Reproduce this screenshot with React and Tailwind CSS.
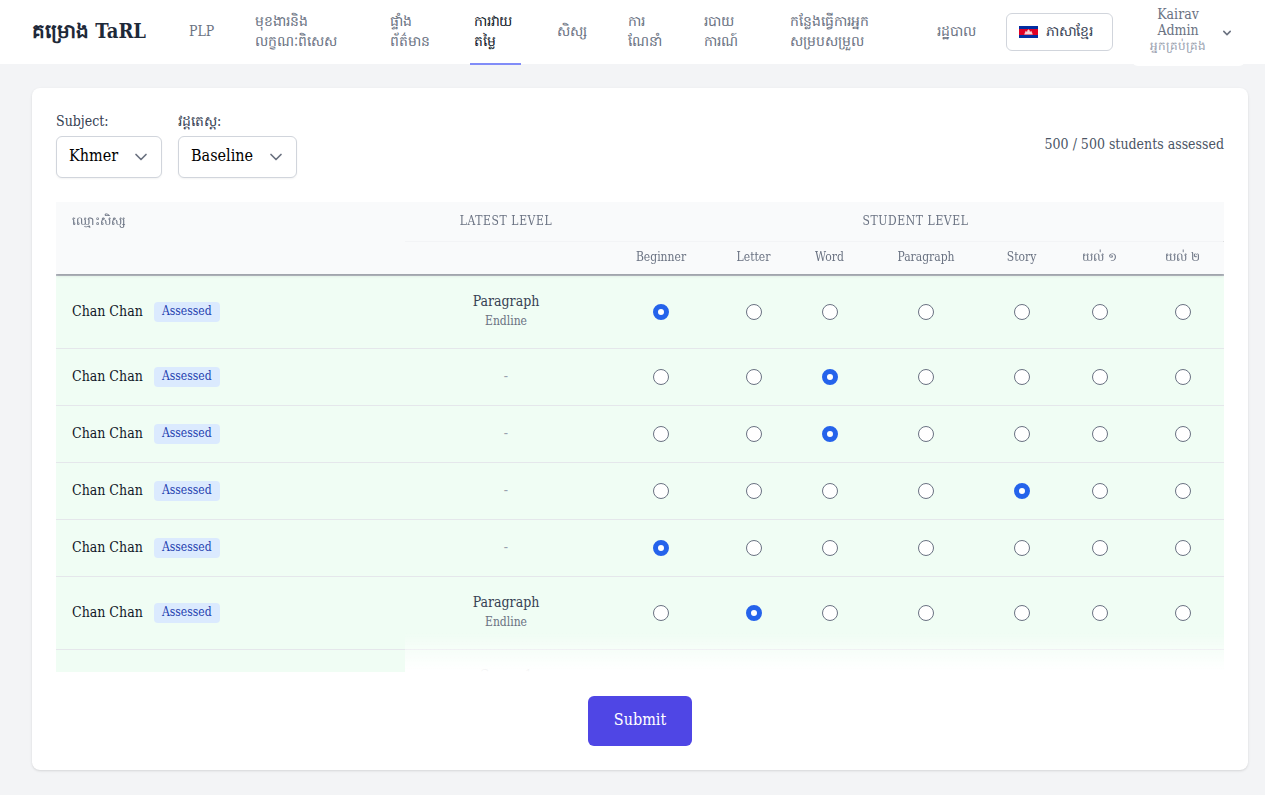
import { useState } from "react";

const NAV_ITEMS = [
  { lines: ["PLP"], width: "w-[34px]" },
  { lines: ["មុខងារនិង", "លក្ខណៈពិសេស"], width: "w-[103px]" },
  { lines: ["ផ្ទាំង", "ព័ត៌មាន"], width: "w-[52px]" },
  { lines: ["ការវាយ", "តម្លៃ"], width: "w-[51px]", active: true },
  { lines: ["សិស្ស"], width: "w-[39px]" },
  { lines: ["ការ", "ណែនាំ"], width: "w-[44px]" },
  { lines: ["របាយ", "ការណ៍"], width: "w-[54px]" },
  { lines: ["កន្លែងធ្វើការអ្នក", "សម្របសម្រួល"], width: "w-[115px]" },
  { lines: ["រដ្ឋបាល"], width: "w-[49px]" },
];

const LEVELS = ["Beginner", "Letter", "Word", "Paragraph", "Story", "យល់ ១", "យល់ ២"];

const STUDENTS = [
  { id: 1, name: "Chan Chan", latest: "Paragraph", cycle: "Endline", level: "Beginner" },
  { id: 2, name: "Chan Chan", level: "Word" },
  { id: 3, name: "Chan Chan", level: "Word" },
  { id: 4, name: "Chan Chan", level: "Story" },
  { id: 5, name: "Chan Chan", level: "Beginner" },
  { id: 6, name: "Chan Chan", latest: "Paragraph", cycle: "Endline", level: "Letter" },
  { id: 7, name: "Chan Chan", latest: "Comp. 1", cycle: "Endline", level: "Word" },
];

function CambodiaFlag() {
  return (
    <svg viewBox="0 0 19 12" className="h-3 w-[19px] shrink-0" aria-hidden="true">
      <rect width="19" height="12" fill="#032ea1" />
      <rect y="3" width="19" height="6" fill="#e00025" />
      <path
        d="M5.3 8.5V7.5h.6V6.2h.5V5.3l.5-.6.5.6v.5h.8V4.6l.5-.4.8-.9.8.9.5.4v1.2h.8v-.5l.5-.6.5.6v.9h.5v1.3h.6v1z"
        fill="#f3d3da"
      />
    </svg>
  );
}

function SelectField({ id, label, width, options }) {
  return (
    <div className="flex flex-col items-start">
      <label htmlFor={id} className="pb-1.5 text-sm leading-[18px] text-gray-700">
        {label}
      </label>
      <div className={`relative ${width}`}>
        <select
          id={id}
          className="block h-[42px] w-full appearance-none rounded-md border border-gray-300 bg-white pb-0.5 pl-3 pr-8 text-base text-black shadow-xs"
        >
          {options.map((o) => (
            <option key={o}>{o}</option>
          ))}
        </select>
        <svg
          viewBox="0 0 20 20"
          className="pointer-events-none absolute right-[11px] top-[11px] h-5 w-5"
          fill="none"
          stroke="#6b7280"
          strokeWidth="1.7"
          strokeLinecap="round"
          strokeLinejoin="round"
          aria-hidden="true"
        >
          <path d="M5 7.5l5 5 5-5" />
        </svg>
      </div>
    </div>
  );
}

function NavBar() {
  return (
    <nav className="flex h-16 items-center bg-white pl-8 pr-5">
      <a href="#home" className="mr-10 w-[113px] shrink-0 whitespace-nowrap pb-0.5 text-xl font-bold leading-7 text-gray-800">
        គម្រោង TaRL
      </a>
      <div className="-mb-px flex h-[65px] gap-8">
        {NAV_ITEMS.map((item) => (
          <a
            key={item.lines.join("")}
            href="#nav"
            className={`flex shrink-0 flex-col justify-center whitespace-nowrap border-b-2 px-1 pb-0.5 text-sm leading-5 ${item.width} ${
              item.active ? "border-[#818cf8] text-gray-900" : "border-transparent text-gray-500"
            }`}
          >
            {item.lines.map((line) => (
              <span key={line}>{line}</span>
            ))}
          </a>
        ))}
      </div>
      <button
        type="button"
        className="ml-6 flex h-[38px] w-[107px] shrink-0 items-center gap-2 rounded-md border border-gray-300 bg-white px-3 text-sm leading-5 text-gray-700"
      >
        <CambodiaFlag />
        <span className="whitespace-nowrap pb-0.5">ភាសាខ្មែរ</span>
      </button>
      <button
        type="button"
        className="-mb-[2px] ml-auto flex h-[66px] w-[113px] shrink-0 items-center justify-between rounded-md bg-white pl-[18px] pr-2.5 text-sm text-gray-500"
      >
        <span className="flex flex-col items-center pb-1.5 leading-4">
          <span>Kairav</span>
          <span>Admin</span>
          <span className="whitespace-nowrap text-xs text-gray-400">អ្នកគ្រប់គ្រង</span>
        </span>
        <svg viewBox="0 0 20 20" className="h-4 w-4 shrink-0" fill="#6b7280" aria-hidden="true">
          <path
            fillRule="evenodd"
            clipRule="evenodd"
            d="M5.293 7.293a1 1 0 011.414 0L10 10.586l3.293-3.293a1 1 0 111.414 1.414l-4 4a1 1 0 01-1.414 0l-4-4a1 1 0 010-1.414z"
          />
        </svg>
      </button>
    </nav>
  );
}

function StudentRow({ student, value, onChange }) {
  return (
    <tr className={`border-b border-gray-200 bg-green-50 ${student.latest ? "h-[73px]" : "h-[57px]"}`}>
      <td className="px-4">
        <div className="flex items-center gap-2 text-sm leading-5 text-gray-900">
          <span className="min-w-[74px] pb-0.5">{student.name}</span>
          <span className="rounded-sm bg-blue-100 px-2 pb-[3px] pt-px text-xs leading-4 text-[#1e40af]">Assessed</span>
        </div>
      </td>
      <td className="px-4 pb-0.5 text-center">
        {student.latest ? (
          <div className="flex flex-col text-sm leading-5 text-gray-700">
            <span>{student.latest}</span>
            <span className="text-xs leading-5 text-gray-500">{student.cycle}</span>
          </div>
        ) : (
          <div className="text-sm leading-5 text-gray-400">-</div>
        )}
      </td>
      {LEVELS.map((level) => (
        <td key={level} className="text-center align-middle">
          <input
            type="radio"
            name={`student-${student.id}`}
            aria-label={level}
            checked={value === level}
            onChange={() => onChange(level)}
            className="mx-auto block h-4 w-4 appearance-none rounded-full border border-gray-500 bg-white checked:border-[5px] checked:border-[#2563eb]"
          />
        </td>
      ))}
    </tr>
  );
}

export default function App() {
  const [levels, setLevels] = useState(() => Object.fromEntries(STUDENTS.map((s) => [s.id, s.level])));

  return (
    <div className="min-h-screen bg-gray-100 font-['DejaVu_Serif_Condensed','DejaVu_Serif',serif]">
      <NavBar />
      <main className="py-6 pl-8 pr-[17px]">
        <section className="rounded-lg bg-white p-6 shadow-sm">
          <div className="mb-6 flex items-center justify-between">
            <div className="flex gap-4">
              <SelectField id="subject" label="Subject:" width="w-[106px]" options={["Khmer", "Math"]} />
              <SelectField id="cycle" label="វដ្តតេស្ត:" width="w-[119px]" options={["Baseline", "Midline", "Endline"]} />
            </div>
            <p className="pb-0.5 text-sm leading-5 text-gray-600">500 / 500 students assessed</p>
          </div>

          <div className="relative">
            <div className="h-[470px] overflow-y-auto [scrollbar-width:none]">
              <table className="w-full table-fixed border-collapse">
                <colgroup>
                  <col className="w-[349px]" />
                  <col className="w-[202px]" />
                  <col className="w-[108px]" />
                  <col className="w-[77px]" />
                  <col className="w-[75px]" />
                  <col className="w-[118px]" />
                  <col className="w-[73px]" />
                  <col className="w-[83px]" />
                  <col className="w-[83px]" />
                </colgroup>
                <thead className="sticky top-0 z-10 border-b-2 border-[#bcc0c9] bg-gray-50 text-xs leading-4 text-gray-500 shadow-sm">
                  <tr className="h-[39px]">
                    <th rowSpan={2} className="px-4 pt-[11px] text-left align-top font-normal">
                      ឈ្មោះសិស្ស
                    </th>
                    <th className="text-center font-normal uppercase tracking-wider">Latest Level</th>
                    <th colSpan={7} className="text-center font-normal uppercase tracking-wider">
                      Student Level
                    </th>
                  </tr>
                  <tr className="h-[34px]">
                    <th className="border-t border-gray-100" />
                    {LEVELS.map((level) => (
                      <th key={level} className="border-t border-gray-100 pb-0.5 text-center font-normal">
                        {level}
                      </th>
                    ))}
                  </tr>
                </thead>
                <tbody>
                  {STUDENTS.map((s) => (
                    <StudentRow
                      key={s.id}
                      student={s}
                      value={levels[s.id]}
                      onChange={(level) => setLevels({ ...levels, [s.id]: level })}
                    />
                  ))}
                </tbody>
              </table>
            </div>
            <div className="pointer-events-none absolute bottom-0 right-0 z-20 h-10 w-[819px] bg-linear-to-t from-white to-transparent" />
          </div>

          <div className="mt-6 flex justify-center">
            <button type="button" className="h-[50px] w-[104px] rounded-md bg-[#4f46e5] pb-0.5 text-base text-white">
              Submit
            </button>
          </div>
        </section>
      </main>
    </div>
  );
}
